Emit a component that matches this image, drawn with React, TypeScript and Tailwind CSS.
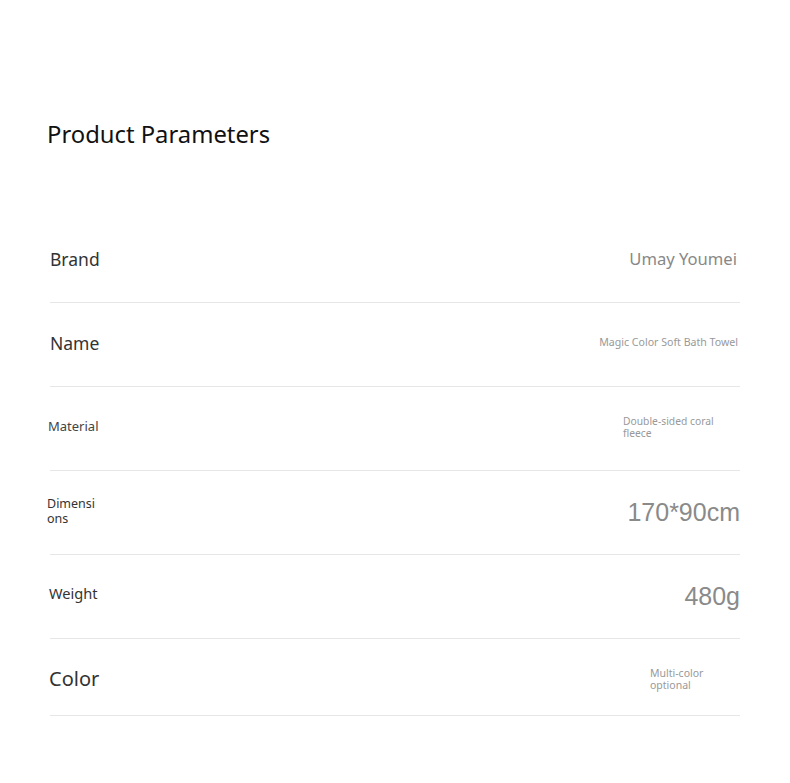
import React from 'react';

type Row = {
  label: React.ReactNode;
  value: React.ReactNode;
  h: string;
};

const sans = { fontFamily: '"Noto Sans", "Open Sans", sans-serif' };
const arial = { fontFamily: '"Liberation Sans", Arial, sans-serif' };

export default function App() {
  const rows: Row[] = [
    {
      h: 'h-[84px]',
      label: <span className="-mt-[2px] text-[17.5px] text-[#333]">Brand</span>,
      value: <span className="mr-[3px] -mt-[2px] text-[16.6px] text-[#888]">Umay Youmei</span>,
    },
    {
      h: 'h-[84px]',
      label: <span className="-mt-[2px] text-[17.5px] text-[#333]">Name</span>,
      value: <span className="mr-[2px] -mt-[4px] text-[10.6px] text-[#999]">Magic Color Soft Bath Towel</span>,
    },
    {
      h: 'h-[84px]',
      label: <span className="-ml-[2px] -mt-[4px] text-[13px] text-[#444]">Material</span>,
      value: (
        <span className="block w-[117px] -mt-[4px] text-left text-[10.3px] leading-[12px] text-[#999]">
          Double-sided coral fleece
        </span>
      ),
    },
    {
      h: 'h-[84px]',
      label: (
        <span className="block w-[54px] -ml-[3px] -mt-[4px] break-all text-[12.5px] leading-[15px] text-[#333]">
          Dimensions
        </span>
      ),
      value: (
        <span className="text-[25px] text-[#8a8a8a]" style={arial}>
          170*90cm
        </span>
      ),
    },
    {
      h: 'h-[84px]',
      label: <span className="-ml-[1px] -mt-[6px] text-[14.6px] text-[#333]">Weight</span>,
      value: (
        <span className="text-[25px] text-[#8a8a8a]" style={arial}>
          480g
        </span>
      ),
    },
    {
      h: 'h-[77px]',
      label: <span className="-ml-[1px] mt-[4px] text-[20px] text-[#333]">Color</span>,
      value: (
        <span className="block w-[90px] mt-[4px] text-left text-[10.5px] leading-[12px] text-[#999]">
          Multi-color optional
        </span>
      ),
    },
  ];

  return (
    <div className="min-h-[783px] w-[790px] bg-white" style={sans}>
      <div className="pt-[118px] pl-[47px]">
        <h1 className="text-[23.8px] font-normal leading-[32px] text-[#111]">Product Parameters</h1>
      </div>
      <div className="mt-[69px] ml-[50px] w-[690px]">
        {rows.map((r, i) => (
          <div
            key={i}
            className={`flex items-center justify-between border-b border-[#e6e6e6] ${r.h}`}
          >
            <div className="flex items-center">{r.label}</div>
            <div className="flex items-center">{r.value}</div>
          </div>
        ))}
      </div>
    </div>
  );
}
